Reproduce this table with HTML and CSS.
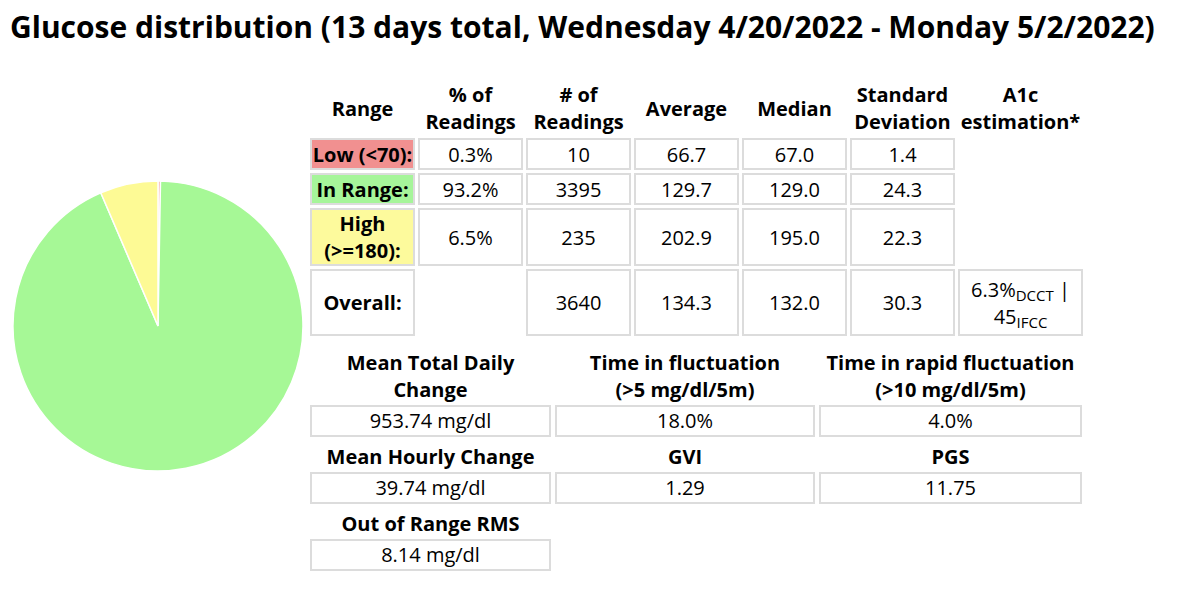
FILE: index.html
```html
<!DOCTYPE html>
<html>
<head>
<meta charset="utf-8">
<title>Glucose distribution</title>
<link rel="stylesheet" href="styles.css">
</head>
<body>
<h1 class="title">Glucose distribution (13 days total, Wednesday 4/20/2022 - Monday 5/2/2022)</h1>
<div class="content">
  <div class="pie">
    <svg width="290" height="290" viewBox="0 0 290 290">
      <path class="slice-low" d="M145,145 L145,0 A145,145 0 0,1 147.50,0.02 Z"/>
      <path class="slice-range" d="M145,145 L147.50,0.02 A145,145 0 1,1 87.78,11.76 Z"/>
      <path class="slice-high" d="M145,145 L87.78,11.76 A145,145 0 0,1 145,0 Z"/>
    </svg>
  </div>
  <div class="stats">
    <table class="dist">
      <colgroup>
        <col class="c"><col class="c"><col class="c"><col class="c"><col class="c"><col class="c"><col class="c-wide">
      </colgroup>
      <thead>
        <tr>
          <th>Range</th>
          <th>% of<br>Readings</th>
          <th># of<br>Readings</th>
          <th>Average</th>
          <th>Median</th>
          <th>Standard<br>Deviation</th>
          <th>A1c<br>estimation*</th>
        </tr>
      </thead>
      <tbody>
        <tr class="row1">
          <td class="lbl low">Low (&lt;70):</td>
          <td class="val">0.3%</td>
          <td class="val">10</td>
          <td class="val">66.7</td>
          <td class="val">67.0</td>
          <td class="val">1.4</td>
          <td class="blank"></td>
        </tr>
        <tr class="row1">
          <td class="lbl inrange">In Range:</td>
          <td class="val">93.2%</td>
          <td class="val">3395</td>
          <td class="val">129.7</td>
          <td class="val">129.0</td>
          <td class="val">24.3</td>
          <td class="blank"></td>
        </tr>
        <tr>
          <td class="lbl high">High<br>(&gt;=180):</td>
          <td class="val">6.5%</td>
          <td class="val">235</td>
          <td class="val">202.9</td>
          <td class="val">195.0</td>
          <td class="val">22.3</td>
          <td class="blank"></td>
        </tr>
        <tr class="row-overall">
          <td class="lbl plain">Overall:</td>
          <td class="blank"></td>
          <td class="val">3640</td>
          <td class="val">134.3</td>
          <td class="val">132.0</td>
          <td class="val">30.3</td>
          <td class="val a1c">6.3%<sub>DCCT</sub> |<br>45<sub>IFCC</sub></td>
        </tr>
      </tbody>
    </table>
    <div class="metrics">
      <div class="mlabel">Mean Total Daily<br>Change</div>
      <div class="mlabel">Time in fluctuation<br>(&gt;5 mg/dl/5m)</div>
      <div class="mlabel">Time in rapid fluctuation<br>(&gt;10 mg/dl/5m)</div>
      <div class="mbox">953.74 mg/dl</div>
      <div class="mbox">18.0%</div>
      <div class="mbox">4.0%</div>
      <div class="mlabel">Mean Hourly Change</div>
      <div class="mlabel">GVI</div>
      <div class="mlabel">PGS</div>
      <div class="mbox">39.74 mg/dl</div>
      <div class="mbox">1.29</div>
      <div class="mbox">11.75</div>
      <div class="mlabel">Out of Range RMS</div>
      <div class="mempty"></div>
      <div class="mempty"></div>
      <div class="mbox">8.14 mg/dl</div>
    </div>
  </div>
</div>
</body>
</html>
```
FILE: styles.css
```css
* { box-sizing: border-box; }
html, body { margin: 0; padding: 0; background: #fff; }
body {
  font-family: "Open Sans", "Liberation Sans", sans-serif;
  color: #000;
  width: 1200px;
  height: 605px;
  overflow: hidden;
}
.title {
  margin: 0;
  padding: 7px 0 0 10px;
  font-size: 30px;
  line-height: 40px;
  font-weight: 700;
  white-space: nowrap;
}
.content {
  display: flex;
  align-items: flex-start;
  margin-top: 31px;
}
.pie {
  margin-left: 13px;
  margin-top: 103px;
  width: 290px;
  height: 290px;
  flex: none;
}
.pie svg { display: block; }
.slice-low { fill: #f19090; stroke: #fff; stroke-width: 1.5; }
.slice-range { fill: #a6f896; stroke: #fff; stroke-width: 1.5; }
.slice-high { fill: #fdfa95; stroke: #fff; stroke-width: 1.5; }

.stats {
  margin-left: 4px;
  display: flex;
  flex-direction: column;
}
.dist {
  border-collapse: separate;
  border-spacing: 3px;
  table-layout: fixed;
  width: 779px;
  font-size: 20px;
  line-height: 27px;
}
.dist col.c { width: 105px; }
.dist col.c-wide { width: 125px; }
.dist th {
  font-weight: 700;
  padding: 0;
  text-align: center;
  vertical-align: middle;
  white-space: nowrap;
}
.dist td {
  padding: 0;
  text-align: center;
  vertical-align: middle;
  white-space: nowrap;
}
.dist tr.row1 td { height: 32px; }
.dist tr.row-overall td { height: 67px; }
.dist td.val { border: 2px solid #dcdcdc; }
.dist td.lbl { border: 2px solid #dcdcdc; font-weight: 700; }
.dist td.low { background: #f19090; }
.dist td.inrange { background: #a6f59a; }
.dist td.high { background: #fdfa9c; }
.dist td.plain { background: #fff; }
.dist td.blank { border: none; }
.dist td.a1c { line-height: 27px; }
.dist sub { font-size: 15px; line-height: 0; vertical-align: -4px; }

.metrics {
  display: grid;
  grid-template-columns: 241px 260px 263px;
  column-gap: 4px;
  margin-left: 3px;
  margin-top: 4px;
  font-size: 20px;
}
.mlabel {
  font-weight: 700;
  text-align: center;
  line-height: 27px;
  padding: 6px 0 2px;
}
.mbox {
  border: 2px solid #dcdcdc;
  text-align: center;
  height: 32px;
  line-height: 28px;
}
.mempty { }
```
